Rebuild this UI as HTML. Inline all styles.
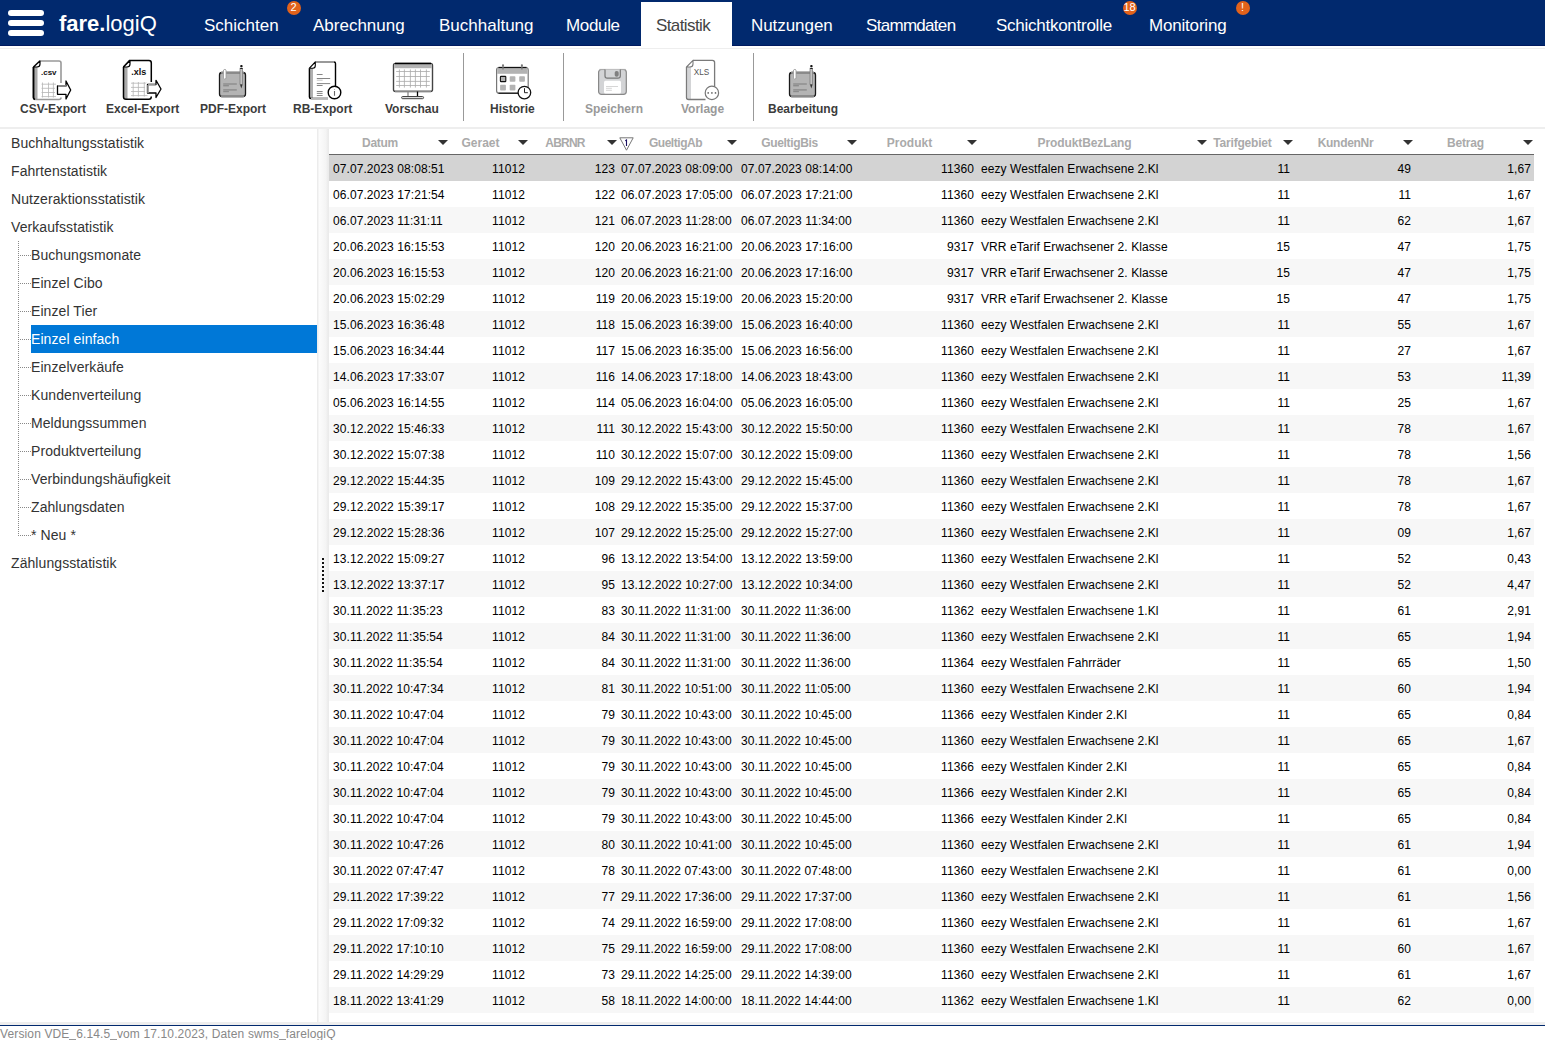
<!DOCTYPE html><html><head><meta charset="utf-8"><title>fare.logiQ</title><style>
*{box-sizing:border-box;margin:0;padding:0}
html,body{width:1545px;height:1040px;overflow:hidden;background:#fff;font-family:"Liberation Sans",sans-serif;position:relative}
.a{position:absolute;white-space:nowrap}
#nav{position:absolute;left:0;top:0;width:1545px;height:46px;background:#01296e;border-bottom:1px solid #001a60}
.bar{position:absolute;left:8px;width:36px;height:6px;border-radius:3px;background:#fff}
.tab{position:absolute;top:16px;font-size:17px;color:#fff;line-height:20px}
.badge{position:absolute;top:1px;width:14px;height:14px;border-radius:7px;background:#e2621b;color:#fff;font-size:11px;line-height:13px;text-align:center}
.tl{position:absolute;top:102px;font-size:12px;font-weight:bold;color:#3c3c3c;line-height:14px}
.tl.dis{color:#999}
.sep{position:absolute;top:53px;width:1px;height:68px;background:#999}
.tree{position:absolute;font-size:14px;color:#333;line-height:16px;letter-spacing:0.08px}
.hd{position:absolute;top:136px;font-size:12px;font-weight:bold;color:#aaa;line-height:14px;text-align:center}
.arr{position:absolute;top:140px;width:0;height:0;border-left:5px solid transparent;border-right:5px solid transparent;border-top:5px solid #333}
.us{display:inline-block;width:6.67px;height:1px;background:#999;vertical-align:-2px}
.row{position:absolute;left:329px;width:1205px;height:26px}
.c{position:absolute;top:7px;font-size:12px;color:#000;line-height:14px;white-space:nowrap;letter-spacing:0.08px}
</style></head><body>
<div id="nav">
<div class="bar" style="top:10px"></div>
<div class="bar" style="top:20px"></div>
<div class="bar" style="top:30px"></div>
<div class="a" style="left:59px;top:10.5px;font-size:22px;line-height:26px;color:#fff"><b>fare.</b>logiQ</div>
<div class="a" style="left:641px;top:2px;width:91px;height:44px;background:#fff"></div>
<div class="tab" style="left:204px;color:#fff;letter-spacing:0px">Schichten</div>
<div class="tab" style="left:313px;color:#fff;letter-spacing:0px">Abrechnung</div>
<div class="tab" style="left:439px;color:#fff;letter-spacing:0px">Buchhaltung</div>
<div class="tab" style="left:566px;color:#fff;letter-spacing:-0.34px">Module</div>
<div class="tab" style="left:656px;color:#444;letter-spacing:-0.6px">Statistik</div>
<div class="tab" style="left:751px;color:#fff;letter-spacing:-0.06px">Nutzungen</div>
<div class="tab" style="left:866px;color:#fff;letter-spacing:-0.7px">Stammdaten</div>
<div class="tab" style="left:996px;color:#fff;letter-spacing:-0.26px">Schichtkontrolle</div>
<div class="tab" style="left:1149px;color:#fff;letter-spacing:-0.19px">Monitoring</div>
<div class="badge" style="left:286.5px">2</div>
<div class="badge" style="left:1122.5px">18</div>
<div class="badge" style="left:1235.5px">!</div>
</div>
<div class="a" style="left:0;top:48px;width:1545px;height:1px;background:#eee"></div>
<div class="tl" style="left:20px">CSV-Export</div>
<div class="tl" style="left:106px">Excel-Export</div>
<div class="tl" style="left:200px">PDF-Export</div>
<div class="tl" style="left:293px">RB-Export</div>
<div class="tl" style="left:385px">Vorschau</div>
<div class="tl" style="left:490px">Historie</div>
<div class="tl dis" style="left:585px">Speichern</div>
<div class="tl dis" style="left:681px">Vorlage</div>
<div class="tl" style="left:768px">Bearbeitung</div>
<div class="sep" style="left:463px"></div>
<div class="sep" style="left:563px"></div>
<div class="sep" style="left:753px"></div>
<svg class="a" style="left:28px;top:56px" width="48" height="48" viewBox="0 0 48 48">
 <rect x="6" y="11" width="3.5" height="32" fill="#aaa"/>
 <path d="M5.5,11 L11.5,5 H31 Q33,5 33,7 V27" fill="none" stroke="#999" stroke-width="1.6"/>
 <path d="M5.5,11 V41.5 Q5.5,43.5 8,43.5 H31 Q33,43.5 33,41.5" fill="none" stroke="#999" stroke-width="1.6"/>
 <path d="M5.5,11 V41.5 Q5.5,43 7,43.5" fill="none" stroke="#000" stroke-width="1.8"/>
 <path d="M5.5,11 H9 Q12,11 12,8 V5 L5.5,11 Z" fill="#fff" stroke="#000" stroke-width="1.2" stroke-linejoin="round"/>
 <text x="13" y="19" font-family="Liberation Sans" font-size="8" font-weight="bold" fill="#111">.csv</text>
 <g stroke="#b5b5b5" stroke-width="0.8">
  <path d="M13.5,28.2 H28 M13.5,32.3 H27 M13.5,36.5 H27 M13.5,40.6 H28 M14.5,26.5 V41.5 M20.5,26.5 V41.5 M25.4,26.5 V41.5"/>
 </g>
 <path d="M29.5,30 H38 V25 L42.7,34 L38,43 V38.3 H29.5 Z" fill="#fff" stroke="#fff" stroke-width="4" stroke-linejoin="round"/>
 <path d="M29.5,30 H38 V25 L42.7,34 L38,43 V38.3 H29.5 Z" fill="#fff" stroke="#000" stroke-width="1.3" stroke-linejoin="round"/>
 <path d="M30,30 H38" stroke="#999" stroke-width="1.6"/>
</svg>
<svg class="a" style="left:118px;top:56px" width="48" height="48" viewBox="0 0 48 48">
 <rect x="6" y="11" width="3.5" height="32" fill="#aaa"/>
 <path d="M5.5,11 L11.5,4.5 H31 Q33.3,4.5 33.3,7 V26 M33.3,40.5 Q33.3,43.3 31,43.3 H8 Q5.5,43.3 5.5,41 V11" fill="none" stroke="#000" stroke-width="1.5"/>
 <path d="M5.5,11 H9 Q12,11 12,8 V4.5 L5.5,11 Z" fill="#fff" stroke="#000" stroke-width="1.2" stroke-linejoin="round"/>
 <text x="13.2" y="19" font-family="Liberation Sans" font-size="9" font-weight="bold" fill="#111">.xls</text>
 <g stroke="#b5b5b5" stroke-width="0.8">
  <path d="M13,27.2 H29 M13,31.4 H27 M13,35.5 H27 M13,39.6 H29.5 M15.2,26 V40.5 M20.4,26 V40.5 M26.3,26 V40.5"/>
 </g>
 <path d="M29.5,28.5 H38 V24.3 L43,33 L38,41.5 V37 H29.5 Z" fill="#fff" stroke="#fff" stroke-width="4" stroke-linejoin="round"/>
 <path d="M29.5,28.5 H38 V24.3 L43,33 L38,41.5 V37 H29.5 Z" fill="#fff" stroke="#000" stroke-width="1.3" stroke-linejoin="round"/>
 <path d="M30,28.5 H37.5 M30,29 V37" stroke="#999" stroke-width="1.6"/>
</svg>
<svg class="a" style="left:212px;top:60px" width="40" height="40" viewBox="0 0 40 40">
 <rect x="7.5" y="12.5" width="26" height="24" rx="2.5" fill="#b4b4b4" stroke="#1a1a1a" stroke-width="1.3"/>
 <path d="M9,12.5 H32 M9,36.5 H32" stroke="#8a8a8a" stroke-width="1.3"/>
 <path d="M11.5,10 L13,9.2 L14,10 V18.5 L12.5,19 L11.5,18.5 Z" fill="#fff" stroke="#999" stroke-width="0.8"/>
 <rect x="11.2" y="23.3" width="13.6" height="1.4" fill="#8c8c8c"/>
 <rect x="11.2" y="25" width="5.7" height="1.4" fill="#8c8c8c"/>
 <rect x="11.2" y="29.2" width="13.6" height="1.4" fill="#8c8c8c"/>
 <rect x="11.2" y="31" width="5.7" height="1.2" fill="#8c8c8c"/>
 <rect x="28" y="8.2" width="2.6" height="16.4" fill="#c4c4c4" stroke="#777" stroke-width="0.7"/>
 <rect x="28.2" y="5" width="2.4" height="2.2" rx="1" fill="#111"/>
 <rect x="28.2" y="8" width="2.4" height="0.9" fill="#111"/>
 <path d="M28,24.6 L29.3,28.5 L30.6,24.6 Z" fill="#333"/>
</svg>
<svg class="a" style="left:302px;top:56px" width="44" height="48" viewBox="0 0 44 48">
 <rect x="7.8" y="12" width="3.2" height="30.5" fill="#b0b0b0"/>
 <path d="M13.3,6 H32 Q33.5,6 33.5,7.5 V30 M26,42.5 H9 Q7.4,42.5 7.4,41 V12.2" fill="none" stroke="#000" stroke-width="1.4"/>
 <path d="M13.3,6 H32 M26,42.5 H9" stroke="#b8b8b8" stroke-width="1.4"/>
 <path d="M7.4,12.2 H11 Q13.3,12.2 13.3,9.5 V6 Z" fill="#fff" stroke="#000" stroke-width="1.1" stroke-linejoin="round"/>
 <g stroke="#777" stroke-width="0.9">
  <path d="M14.8,18.5 H20.6 M14.8,22.5 H28.2 M14.8,27.6 H28.2 M14.8,29.5 H20.6 M14.8,35.5 H20.6 M14.8,37.4 H20.6 M14.8,39.5 H20.6"/>
 </g>
 <path d="M14.8,24.2 H20.6" stroke="#bbb" stroke-width="0.9"/>
 <circle cx="32.5" cy="36.5" r="6.3" fill="#fff" stroke="#000" stroke-width="1.4"/>
 <path d="M32.5,33.2 V33.8 M32.5,35 V39.7" stroke="#666" stroke-width="1.1"/>
</svg>
<svg class="a" style="left:389px;top:58px" width="48" height="44" viewBox="0 0 48 44">
 <rect x="4.5" y="5.5" width="39" height="28" rx="2" fill="#fff" stroke="#444" stroke-width="1.4"/>
 <rect x="5.2" y="6.2" width="37.6" height="4" fill="#b3b3b3"/>
 <path d="M6,5.5 H42" stroke="#000" stroke-width="1.6"/>
 <path d="M6,33.2 H42" stroke="#888" stroke-width="1.4"/>
 <g stroke="#aaa" stroke-width="0.8">
  <path d="M7.2,13.5 H40.8 M7.2,18.5 H40.8 M7.2,23.4 H40.8 M7.2,27.5 H40.8 M10.4,11.4 V29.6 M15.4,11.4 V29.6 M21.4,11.4 V29.6 M26.4,11.4 V29.6 M31.5,11.4 V29.6 M37.4,11.4 V29.6"/>
 </g>
 <path d="M19,33.5 V38.3" stroke="#888" stroke-width="1.3"/>
 <path d="M28.5,33.5 V38.3" stroke="#000" stroke-width="1.3"/>
 <rect x="12.6" y="38.5" width="22" height="2.2" rx="1.1" fill="#ddd" stroke="#444" stroke-width="1"/>
</svg>
<svg class="a" style="left:490px;top:58px" width="48" height="44" viewBox="0 0 48 44">
 <rect x="6.6" y="9.6" width="31.6" height="25.6" rx="2.5" fill="#fff" stroke="#777" stroke-width="1.2"/>
 <rect x="7.2" y="10.2" width="30.4" height="5.6" fill="#b3b3b3"/>
 <path d="M8.5,9.5 H36.5" stroke="#111" stroke-width="1.3"/>
 <path d="M8.5,35.3 H30" stroke="#222" stroke-width="1.3"/>
 <circle cx="13" cy="7.3" r="1.1" fill="#777"/>
 <circle cx="31.9" cy="7.3" r="1.1" fill="#777"/>
 <path d="M13,8 V11.5 M31.9,8 V11.5" stroke="#777" stroke-width="1.3"/>
 <rect x="10.4" y="18.4" width="5.4" height="5.2" rx="0.7" fill="#b3b3b3" stroke="#111" stroke-width="1.1"/>
 <rect x="19.7" y="18.2" width="5.7" height="5.5" rx="0.8" fill="#b3b3b3"/>
 <rect x="29.2" y="18.2" width="5.7" height="5.5" rx="0.8" fill="#b3b3b3"/>
 <rect x="10.1" y="26.8" width="5.8" height="5.8" rx="0.8" fill="#b3b3b3"/>
 <rect x="19.7" y="26.8" width="5.7" height="5.8" rx="0.8" fill="#b3b3b3"/>
 <circle cx="34.4" cy="34.6" r="6.3" fill="#fff" stroke="#111" stroke-width="1.3"/>
 <path d="M34.5,30.2 V34.7 H37.8" fill="none" stroke="#222" stroke-width="1"/>
</svg>
<svg class="a" style="left:592px;top:62px" width="40" height="38" viewBox="0 0 40 38">
 <rect x="6.6" y="7.5" width="27.7" height="24.8" rx="2.8" fill="#d3d4d6" stroke="#888" stroke-width="1.2"/>
 <path d="M7.5,7.5 H33.5" stroke="#aaa" stroke-width="1.2"/>
 <path d="M13,7.5 V14 Q13,16.2 15.2,16.2 H26 Q28.3,16.2 28.3,14 V7.5" fill="#d3d4d6" stroke="#777" stroke-width="1.2"/>
 <rect x="22.7" y="8.9" width="4" height="5.9" rx="1.8" fill="#808080"/>
 <rect x="12" y="18.8" width="17" height="12.8" rx="1.5" fill="#fff"/>
 <path d="M14,24.5 H26 M14,26.3 H19.9 M14,28.3 H19.9" stroke="#ccc" stroke-width="0.8"/>
</svg>
<svg class="a" style="left:680px;top:56px" width="44" height="48" viewBox="0 0 44 48">
 <rect x="7.2" y="11" width="3.8" height="32.5" fill="#d3d4d6"/>
 <path d="M13,4.4 H32.4 Q34.6,4.4 34.6,6.6 V30.5 M25.5,43.5 H8.6 Q6.5,43.5 6.5,41.5 V11" fill="none" stroke="#7a7a7a" stroke-width="1.3"/>
 <path d="M6.5,11 H10 Q13,11 13,8 V4.4 Z" fill="#fff" stroke="#7a7a7a" stroke-width="1.1" stroke-linejoin="round"/>
 <text x="13.8" y="19" font-family="Liberation Sans" font-size="8.2" fill="#555">XLS</text>
 <circle cx="31.9" cy="36.9" r="6.7" fill="#fff" stroke="#777" stroke-width="1.2"/>
 <circle cx="28.2" cy="36.9" r="0.85" fill="#666"/>
 <circle cx="31.9" cy="36.9" r="0.85" fill="#666"/>
 <circle cx="35.5" cy="36.9" r="0.85" fill="#666"/>
</svg>
<svg class="a" style="left:782px;top:60px" width="40" height="40" viewBox="0 0 40 40">
 <rect x="7.5" y="12.5" width="26" height="24" rx="2.5" fill="#b4b4b4" stroke="#1a1a1a" stroke-width="1.3"/>
 <path d="M9,12.5 H32 M9,36.5 H32" stroke="#8a8a8a" stroke-width="1.3"/>
 <path d="M11.5,10 L13,9.2 L14,10 V18.5 L12.5,19 L11.5,18.5 Z" fill="#fff" stroke="#999" stroke-width="0.8"/>
 <rect x="11.2" y="23.3" width="13.6" height="1.4" fill="#8c8c8c"/>
 <rect x="11.2" y="25" width="5.7" height="1.4" fill="#8c8c8c"/>
 <rect x="11.2" y="29.2" width="13.6" height="1.4" fill="#8c8c8c"/>
 <rect x="11.2" y="31" width="5.7" height="1.2" fill="#8c8c8c"/>
 <rect x="28" y="8.2" width="2.6" height="16.4" fill="#c4c4c4" stroke="#777" stroke-width="0.7"/>
 <rect x="28.2" y="5" width="2.4" height="2.2" rx="1" fill="#111"/>
 <rect x="28.2" y="8" width="2.4" height="0.9" fill="#111"/>
 <path d="M28,24.6 L29.3,28.5 L30.6,24.6 Z" fill="#333"/>
</svg>

<div class="a" style="left:0;top:127px;width:1545px;height:2px;background:#eee"></div>
<div class="tree" style="left:11px;top:135px;color:#333">Buchhaltungsstatistik</div>
<div class="tree" style="left:11px;top:163px;color:#333">Fahrtenstatistik</div>
<div class="tree" style="left:11px;top:191px;color:#333">Nutzeraktionsstatistik</div>
<div class="tree" style="left:11px;top:219px;color:#333">Verkaufsstatistik</div>
<div class="tree" style="left:31px;top:247px;color:#333">Buchungsmonate</div>
<div class="a" style="left:18px;top:255px;width:13px;height:1px;background:repeating-linear-gradient(to right,#888 0 1px,transparent 1px 2px)"></div>
<div class="tree" style="left:31px;top:275px;color:#333">Einzel Cibo</div>
<div class="a" style="left:18px;top:283px;width:13px;height:1px;background:repeating-linear-gradient(to right,#888 0 1px,transparent 1px 2px)"></div>
<div class="tree" style="left:31px;top:303px;color:#333">Einzel Tier</div>
<div class="a" style="left:18px;top:311px;width:13px;height:1px;background:repeating-linear-gradient(to right,#888 0 1px,transparent 1px 2px)"></div>
<div class="a" style="left:31px;top:325px;width:286px;height:28px;background:#0078d7"></div>
<div class="tree" style="left:31px;top:331px;color:#fff">Einzel einfach</div>
<div class="a" style="left:18px;top:339px;width:13px;height:1px;background:repeating-linear-gradient(to right,#888 0 1px,transparent 1px 2px)"></div>
<div class="tree" style="left:31px;top:359px;color:#333">Einzelverkäufe</div>
<div class="a" style="left:18px;top:367px;width:13px;height:1px;background:repeating-linear-gradient(to right,#888 0 1px,transparent 1px 2px)"></div>
<div class="tree" style="left:31px;top:387px;color:#333">Kundenverteilung</div>
<div class="a" style="left:18px;top:395px;width:13px;height:1px;background:repeating-linear-gradient(to right,#888 0 1px,transparent 1px 2px)"></div>
<div class="tree" style="left:31px;top:415px;color:#333">Meldungssummen</div>
<div class="a" style="left:18px;top:423px;width:13px;height:1px;background:repeating-linear-gradient(to right,#888 0 1px,transparent 1px 2px)"></div>
<div class="tree" style="left:31px;top:443px;color:#333">Produktverteilung</div>
<div class="a" style="left:18px;top:451px;width:13px;height:1px;background:repeating-linear-gradient(to right,#888 0 1px,transparent 1px 2px)"></div>
<div class="tree" style="left:31px;top:471px;color:#333">Verbindungshäufigkeit</div>
<div class="a" style="left:18px;top:479px;width:13px;height:1px;background:repeating-linear-gradient(to right,#888 0 1px,transparent 1px 2px)"></div>
<div class="tree" style="left:31px;top:499px;color:#333">Zahlungsdaten</div>
<div class="a" style="left:18px;top:507px;width:13px;height:1px;background:repeating-linear-gradient(to right,#888 0 1px,transparent 1px 2px)"></div>
<div class="tree" style="left:31px;top:527px;color:#333">* Neu *</div>
<div class="a" style="left:18px;top:535px;width:13px;height:1px;background:repeating-linear-gradient(to right,#888 0 1px,transparent 1px 2px)"></div>
<div class="tree" style="left:11px;top:555px;color:#333">Zählungsstatistik</div>
<div class="a" style="left:18px;top:241px;width:1px;height:295px;background:repeating-linear-gradient(to bottom,#888 0 1px,transparent 1px 2px)"></div>
<div class="a" style="left:317px;top:129px;width:12px;height:893px;background:linear-gradient(to right,#ececec 0,#ececec 1px,#fcfcfc 2px,#f4f4f4 9px,#ebebeb 11px)"></div>
<div class="a" style="left:322px;top:558px;width:2px;height:34px;border-left:2px dotted #111"></div>
<div class="hd" style="left:329.5px;width:101px;letter-spacing:-0.27px">Datum</div>
<div class="arr" style="left:438px"></div>
<div class="hd" style="left:450.5px;width:60px;letter-spacing:0px">Geraet</div>
<div class="arr" style="left:518px"></div>
<div class="hd" style="left:530.5px;width:69px;letter-spacing:-0.8px">ABRNR</div>
<div class="arr" style="left:607px"></div>
<div class="hd" style="left:631.5px;width:88px;letter-spacing:-0.46px">GueltigAb</div>
<div class="arr" style="left:727px"></div>
<div class="hd" style="left:739.5px;width:100px;letter-spacing:-0.33px">GueltigBis</div>
<div class="arr" style="left:847px"></div>
<div class="hd" style="left:859.5px;width:100px;letter-spacing:0px">Produkt</div>
<div class="arr" style="left:967px"></div>
<div class="hd" style="left:979.5px;width:210px;letter-spacing:-0.11px">ProduktBezLang</div>
<div class="arr" style="left:1197px"></div>
<div class="hd" style="left:1209.5px;width:66px;letter-spacing:-0.2px">Tarifgebiet</div>
<div class="arr" style="left:1283px"></div>
<div class="hd" style="left:1295.5px;width:100px;letter-spacing:-0.31px">KundenNr</div>
<div class="arr" style="left:1403px"></div>
<div class="hd" style="left:1415.5px;width:100px;letter-spacing:-0.2px">Betrag</div>
<div class="arr" style="left:1523px"></div>
<div class="a" style="left:329px;top:154px;width:1205px;height:1px;background:#666"></div>
<svg class="a" style="left:619px;top:137px" width="15" height="14" viewBox="0 0 15 14">
 <path d="M0.8,0.8 H14.2 L7.5,13.2 Z" fill="#fff" stroke="#777" stroke-width="1"/>
 <path d="M6.3,3.8 L7.5,3 V9" fill="none" stroke="#1a1060" stroke-width="1.1"/>
</svg>

<div class="row" style="top:155px;background:#d3d3d3">
<div class="c" style="left:4px">07.07.2023 08:08:51</div>
<div class="c" style="right:1009px">11012</div>
<div class="c" style="right:919px">123</div>
<div class="c" style="left:292px">07.07.2023 08:09:00</div>
<div class="c" style="left:412px">07.07.2023 08:14:00</div>
<div class="c" style="right:560px">11360</div>
<div class="c" style="left:652px">eezy Westfalen Erwachsene 2.Kl</div>
<div class="c" style="right:244px">11</div>
<div class="c" style="right:123px">49</div>
<div class="c" style="right:3px">1,67</div>
</div>
<div class="row" style="top:181px;background:#fff">
<div class="c" style="left:4px">06.07.2023 17:21:54</div>
<div class="c" style="right:1009px">11012</div>
<div class="c" style="right:919px">122</div>
<div class="c" style="left:292px">06.07.2023 17:05:00</div>
<div class="c" style="left:412px">06.07.2023 17:21:00</div>
<div class="c" style="right:560px">11360</div>
<div class="c" style="left:652px">eezy Westfalen Erwachsene 2.Kl</div>
<div class="c" style="right:244px">11</div>
<div class="c" style="right:123px">11</div>
<div class="c" style="right:3px">1,67</div>
</div>
<div class="row" style="top:207px;background:#f7f7f7">
<div class="c" style="left:4px">06.07.2023 11:31:11</div>
<div class="c" style="right:1009px">11012</div>
<div class="c" style="right:919px">121</div>
<div class="c" style="left:292px">06.07.2023 11:28:00</div>
<div class="c" style="left:412px">06.07.2023 11:34:00</div>
<div class="c" style="right:560px">11360</div>
<div class="c" style="left:652px">eezy Westfalen Erwachsene 2.Kl</div>
<div class="c" style="right:244px">11</div>
<div class="c" style="right:123px">62</div>
<div class="c" style="right:3px">1,67</div>
</div>
<div class="row" style="top:233px;background:#fff">
<div class="c" style="left:4px">20.06.2023 16:15:53</div>
<div class="c" style="right:1009px">11012</div>
<div class="c" style="right:919px">120</div>
<div class="c" style="left:292px">20.06.2023 16:21:00</div>
<div class="c" style="left:412px">20.06.2023 17:16:00</div>
<div class="c" style="right:560px">9317</div>
<div class="c" style="left:652px">VRR eTarif Erwachsener 2. Klasse</div>
<div class="c" style="right:244px">15</div>
<div class="c" style="right:123px">47</div>
<div class="c" style="right:3px">1,75</div>
</div>
<div class="row" style="top:259px;background:#f7f7f7">
<div class="c" style="left:4px">20.06.2023 16:15:53</div>
<div class="c" style="right:1009px">11012</div>
<div class="c" style="right:919px">120</div>
<div class="c" style="left:292px">20.06.2023 16:21:00</div>
<div class="c" style="left:412px">20.06.2023 17:16:00</div>
<div class="c" style="right:560px">9317</div>
<div class="c" style="left:652px">VRR eTarif Erwachsener 2. Klasse</div>
<div class="c" style="right:244px">15</div>
<div class="c" style="right:123px">47</div>
<div class="c" style="right:3px">1,75</div>
</div>
<div class="row" style="top:285px;background:#fff">
<div class="c" style="left:4px">20.06.2023 15:02:29</div>
<div class="c" style="right:1009px">11012</div>
<div class="c" style="right:919px">119</div>
<div class="c" style="left:292px">20.06.2023 15:19:00</div>
<div class="c" style="left:412px">20.06.2023 15:20:00</div>
<div class="c" style="right:560px">9317</div>
<div class="c" style="left:652px">VRR eTarif Erwachsener 2. Klasse</div>
<div class="c" style="right:244px">15</div>
<div class="c" style="right:123px">47</div>
<div class="c" style="right:3px">1,75</div>
</div>
<div class="row" style="top:311px;background:#f7f7f7">
<div class="c" style="left:4px">15.06.2023 16:36:48</div>
<div class="c" style="right:1009px">11012</div>
<div class="c" style="right:919px">118</div>
<div class="c" style="left:292px">15.06.2023 16:39:00</div>
<div class="c" style="left:412px">15.06.2023 16:40:00</div>
<div class="c" style="right:560px">11360</div>
<div class="c" style="left:652px">eezy Westfalen Erwachsene 2.Kl</div>
<div class="c" style="right:244px">11</div>
<div class="c" style="right:123px">55</div>
<div class="c" style="right:3px">1,67</div>
</div>
<div class="row" style="top:337px;background:#fff">
<div class="c" style="left:4px">15.06.2023 16:34:44</div>
<div class="c" style="right:1009px">11012</div>
<div class="c" style="right:919px">117</div>
<div class="c" style="left:292px">15.06.2023 16:35:00</div>
<div class="c" style="left:412px">15.06.2023 16:56:00</div>
<div class="c" style="right:560px">11360</div>
<div class="c" style="left:652px">eezy Westfalen Erwachsene 2.Kl</div>
<div class="c" style="right:244px">11</div>
<div class="c" style="right:123px">27</div>
<div class="c" style="right:3px">1,67</div>
</div>
<div class="row" style="top:363px;background:#f7f7f7">
<div class="c" style="left:4px">14.06.2023 17:33:07</div>
<div class="c" style="right:1009px">11012</div>
<div class="c" style="right:919px">116</div>
<div class="c" style="left:292px">14.06.2023 17:18:00</div>
<div class="c" style="left:412px">14.06.2023 18:43:00</div>
<div class="c" style="right:560px">11360</div>
<div class="c" style="left:652px">eezy Westfalen Erwachsene 2.Kl</div>
<div class="c" style="right:244px">11</div>
<div class="c" style="right:123px">53</div>
<div class="c" style="right:3px">11,39</div>
</div>
<div class="row" style="top:389px;background:#fff">
<div class="c" style="left:4px">05.06.2023 16:14:55</div>
<div class="c" style="right:1009px">11012</div>
<div class="c" style="right:919px">114</div>
<div class="c" style="left:292px">05.06.2023 16:04:00</div>
<div class="c" style="left:412px">05.06.2023 16:05:00</div>
<div class="c" style="right:560px">11360</div>
<div class="c" style="left:652px">eezy Westfalen Erwachsene 2.Kl</div>
<div class="c" style="right:244px">11</div>
<div class="c" style="right:123px">25</div>
<div class="c" style="right:3px">1,67</div>
</div>
<div class="row" style="top:415px;background:#f7f7f7">
<div class="c" style="left:4px">30.12.2022 15:46:33</div>
<div class="c" style="right:1009px">11012</div>
<div class="c" style="right:919px">111</div>
<div class="c" style="left:292px">30.12.2022 15:43:00</div>
<div class="c" style="left:412px">30.12.2022 15:50:00</div>
<div class="c" style="right:560px">11360</div>
<div class="c" style="left:652px">eezy Westfalen Erwachsene 2.Kl</div>
<div class="c" style="right:244px">11</div>
<div class="c" style="right:123px">78</div>
<div class="c" style="right:3px">1,67</div>
</div>
<div class="row" style="top:441px;background:#fff">
<div class="c" style="left:4px">30.12.2022 15:07:38</div>
<div class="c" style="right:1009px">11012</div>
<div class="c" style="right:919px">110</div>
<div class="c" style="left:292px">30.12.2022 15:07:00</div>
<div class="c" style="left:412px">30.12.2022 15:09:00</div>
<div class="c" style="right:560px">11360</div>
<div class="c" style="left:652px">eezy Westfalen Erwachsene 2.Kl</div>
<div class="c" style="right:244px">11</div>
<div class="c" style="right:123px">78</div>
<div class="c" style="right:3px">1,56</div>
</div>
<div class="row" style="top:467px;background:#f7f7f7">
<div class="c" style="left:4px">29.12.2022 15:44:35</div>
<div class="c" style="right:1009px">11012</div>
<div class="c" style="right:919px">109</div>
<div class="c" style="left:292px">29.12.2022 15:43:00</div>
<div class="c" style="left:412px">29.12.2022 15:45:00</div>
<div class="c" style="right:560px">11360</div>
<div class="c" style="left:652px">eezy Westfalen Erwachsene 2.Kl</div>
<div class="c" style="right:244px">11</div>
<div class="c" style="right:123px">78</div>
<div class="c" style="right:3px">1,67</div>
</div>
<div class="row" style="top:493px;background:#fff">
<div class="c" style="left:4px">29.12.2022 15:39:17</div>
<div class="c" style="right:1009px">11012</div>
<div class="c" style="right:919px">108</div>
<div class="c" style="left:292px">29.12.2022 15:35:00</div>
<div class="c" style="left:412px">29.12.2022 15:37:00</div>
<div class="c" style="right:560px">11360</div>
<div class="c" style="left:652px">eezy Westfalen Erwachsene 2.Kl</div>
<div class="c" style="right:244px">11</div>
<div class="c" style="right:123px">78</div>
<div class="c" style="right:3px">1,67</div>
</div>
<div class="row" style="top:519px;background:#f7f7f7">
<div class="c" style="left:4px">29.12.2022 15:28:36</div>
<div class="c" style="right:1009px">11012</div>
<div class="c" style="right:919px">107</div>
<div class="c" style="left:292px">29.12.2022 15:25:00</div>
<div class="c" style="left:412px">29.12.2022 15:27:00</div>
<div class="c" style="right:560px">11360</div>
<div class="c" style="left:652px">eezy Westfalen Erwachsene 2.Kl</div>
<div class="c" style="right:244px">11</div>
<div class="c" style="right:123px">09</div>
<div class="c" style="right:3px">1,67</div>
</div>
<div class="row" style="top:545px;background:#fff">
<div class="c" style="left:4px">13.12.2022 15:09:27</div>
<div class="c" style="right:1009px">11012</div>
<div class="c" style="right:919px">96</div>
<div class="c" style="left:292px">13.12.2022 13:54:00</div>
<div class="c" style="left:412px">13.12.2022 13:59:00</div>
<div class="c" style="right:560px">11360</div>
<div class="c" style="left:652px">eezy Westfalen Erwachsene 2.Kl</div>
<div class="c" style="right:244px">11</div>
<div class="c" style="right:123px">52</div>
<div class="c" style="right:3px">0,43</div>
</div>
<div class="row" style="top:571px;background:#f7f7f7">
<div class="c" style="left:4px">13.12.2022 13:37:17</div>
<div class="c" style="right:1009px">11012</div>
<div class="c" style="right:919px">95</div>
<div class="c" style="left:292px">13.12.2022 10:27:00</div>
<div class="c" style="left:412px">13.12.2022 10:34:00</div>
<div class="c" style="right:560px">11360</div>
<div class="c" style="left:652px">eezy Westfalen Erwachsene 2.Kl</div>
<div class="c" style="right:244px">11</div>
<div class="c" style="right:123px">52</div>
<div class="c" style="right:3px">4,47</div>
</div>
<div class="row" style="top:597px;background:#fff">
<div class="c" style="left:4px">30.11.2022 11:35:23</div>
<div class="c" style="right:1009px">11012</div>
<div class="c" style="right:919px">83</div>
<div class="c" style="left:292px">30.11.2022 11:31:00</div>
<div class="c" style="left:412px">30.11.2022 11:36:00</div>
<div class="c" style="right:560px">11362</div>
<div class="c" style="left:652px">eezy Westfalen Erwachsene 1.Kl</div>
<div class="c" style="right:244px">11</div>
<div class="c" style="right:123px">61</div>
<div class="c" style="right:3px">2,91</div>
</div>
<div class="row" style="top:623px;background:#f7f7f7">
<div class="c" style="left:4px">30.11.2022 11:35:54</div>
<div class="c" style="right:1009px">11012</div>
<div class="c" style="right:919px">84</div>
<div class="c" style="left:292px">30.11.2022 11:31:00</div>
<div class="c" style="left:412px">30.11.2022 11:36:00</div>
<div class="c" style="right:560px">11360</div>
<div class="c" style="left:652px">eezy Westfalen Erwachsene 2.Kl</div>
<div class="c" style="right:244px">11</div>
<div class="c" style="right:123px">65</div>
<div class="c" style="right:3px">1,94</div>
</div>
<div class="row" style="top:649px;background:#fff">
<div class="c" style="left:4px">30.11.2022 11:35:54</div>
<div class="c" style="right:1009px">11012</div>
<div class="c" style="right:919px">84</div>
<div class="c" style="left:292px">30.11.2022 11:31:00</div>
<div class="c" style="left:412px">30.11.2022 11:36:00</div>
<div class="c" style="right:560px">11364</div>
<div class="c" style="left:652px">eezy Westfalen Fahrräder</div>
<div class="c" style="right:244px">11</div>
<div class="c" style="right:123px">65</div>
<div class="c" style="right:3px">1,50</div>
</div>
<div class="row" style="top:675px;background:#f7f7f7">
<div class="c" style="left:4px">30.11.2022 10:47:34</div>
<div class="c" style="right:1009px">11012</div>
<div class="c" style="right:919px">81</div>
<div class="c" style="left:292px">30.11.2022 10:51:00</div>
<div class="c" style="left:412px">30.11.2022 11:05:00</div>
<div class="c" style="right:560px">11360</div>
<div class="c" style="left:652px">eezy Westfalen Erwachsene 2.Kl</div>
<div class="c" style="right:244px">11</div>
<div class="c" style="right:123px">60</div>
<div class="c" style="right:3px">1,94</div>
</div>
<div class="row" style="top:701px;background:#fff">
<div class="c" style="left:4px">30.11.2022 10:47:04</div>
<div class="c" style="right:1009px">11012</div>
<div class="c" style="right:919px">79</div>
<div class="c" style="left:292px">30.11.2022 10:43:00</div>
<div class="c" style="left:412px">30.11.2022 10:45:00</div>
<div class="c" style="right:560px">11366</div>
<div class="c" style="left:652px">eezy Westfalen Kinder 2.Kl</div>
<div class="c" style="right:244px">11</div>
<div class="c" style="right:123px">65</div>
<div class="c" style="right:3px">0,84</div>
</div>
<div class="row" style="top:727px;background:#f7f7f7">
<div class="c" style="left:4px">30.11.2022 10:47:04</div>
<div class="c" style="right:1009px">11012</div>
<div class="c" style="right:919px">79</div>
<div class="c" style="left:292px">30.11.2022 10:43:00</div>
<div class="c" style="left:412px">30.11.2022 10:45:00</div>
<div class="c" style="right:560px">11360</div>
<div class="c" style="left:652px">eezy Westfalen Erwachsene 2.Kl</div>
<div class="c" style="right:244px">11</div>
<div class="c" style="right:123px">65</div>
<div class="c" style="right:3px">1,67</div>
</div>
<div class="row" style="top:753px;background:#fff">
<div class="c" style="left:4px">30.11.2022 10:47:04</div>
<div class="c" style="right:1009px">11012</div>
<div class="c" style="right:919px">79</div>
<div class="c" style="left:292px">30.11.2022 10:43:00</div>
<div class="c" style="left:412px">30.11.2022 10:45:00</div>
<div class="c" style="right:560px">11366</div>
<div class="c" style="left:652px">eezy Westfalen Kinder 2.Kl</div>
<div class="c" style="right:244px">11</div>
<div class="c" style="right:123px">65</div>
<div class="c" style="right:3px">0,84</div>
</div>
<div class="row" style="top:779px;background:#f7f7f7">
<div class="c" style="left:4px">30.11.2022 10:47:04</div>
<div class="c" style="right:1009px">11012</div>
<div class="c" style="right:919px">79</div>
<div class="c" style="left:292px">30.11.2022 10:43:00</div>
<div class="c" style="left:412px">30.11.2022 10:45:00</div>
<div class="c" style="right:560px">11366</div>
<div class="c" style="left:652px">eezy Westfalen Kinder 2.Kl</div>
<div class="c" style="right:244px">11</div>
<div class="c" style="right:123px">65</div>
<div class="c" style="right:3px">0,84</div>
</div>
<div class="row" style="top:805px;background:#fff">
<div class="c" style="left:4px">30.11.2022 10:47:04</div>
<div class="c" style="right:1009px">11012</div>
<div class="c" style="right:919px">79</div>
<div class="c" style="left:292px">30.11.2022 10:43:00</div>
<div class="c" style="left:412px">30.11.2022 10:45:00</div>
<div class="c" style="right:560px">11366</div>
<div class="c" style="left:652px">eezy Westfalen Kinder 2.Kl</div>
<div class="c" style="right:244px">11</div>
<div class="c" style="right:123px">65</div>
<div class="c" style="right:3px">0,84</div>
</div>
<div class="row" style="top:831px;background:#f7f7f7">
<div class="c" style="left:4px">30.11.2022 10:47:26</div>
<div class="c" style="right:1009px">11012</div>
<div class="c" style="right:919px">80</div>
<div class="c" style="left:292px">30.11.2022 10:41:00</div>
<div class="c" style="left:412px">30.11.2022 10:45:00</div>
<div class="c" style="right:560px">11360</div>
<div class="c" style="left:652px">eezy Westfalen Erwachsene 2.Kl</div>
<div class="c" style="right:244px">11</div>
<div class="c" style="right:123px">61</div>
<div class="c" style="right:3px">1,94</div>
</div>
<div class="row" style="top:857px;background:#fff">
<div class="c" style="left:4px">30.11.2022 07:47:47</div>
<div class="c" style="right:1009px">11012</div>
<div class="c" style="right:919px">78</div>
<div class="c" style="left:292px">30.11.2022 07:43:00</div>
<div class="c" style="left:412px">30.11.2022 07:48:00</div>
<div class="c" style="right:560px">11360</div>
<div class="c" style="left:652px">eezy Westfalen Erwachsene 2.Kl</div>
<div class="c" style="right:244px">11</div>
<div class="c" style="right:123px">61</div>
<div class="c" style="right:3px">0,00</div>
</div>
<div class="row" style="top:883px;background:#f7f7f7">
<div class="c" style="left:4px">29.11.2022 17:39:22</div>
<div class="c" style="right:1009px">11012</div>
<div class="c" style="right:919px">77</div>
<div class="c" style="left:292px">29.11.2022 17:36:00</div>
<div class="c" style="left:412px">29.11.2022 17:37:00</div>
<div class="c" style="right:560px">11360</div>
<div class="c" style="left:652px">eezy Westfalen Erwachsene 2.Kl</div>
<div class="c" style="right:244px">11</div>
<div class="c" style="right:123px">61</div>
<div class="c" style="right:3px">1,56</div>
</div>
<div class="row" style="top:909px;background:#fff">
<div class="c" style="left:4px">29.11.2022 17:09:32</div>
<div class="c" style="right:1009px">11012</div>
<div class="c" style="right:919px">74</div>
<div class="c" style="left:292px">29.11.2022 16:59:00</div>
<div class="c" style="left:412px">29.11.2022 17:08:00</div>
<div class="c" style="right:560px">11360</div>
<div class="c" style="left:652px">eezy Westfalen Erwachsene 2.Kl</div>
<div class="c" style="right:244px">11</div>
<div class="c" style="right:123px">61</div>
<div class="c" style="right:3px">1,67</div>
</div>
<div class="row" style="top:935px;background:#f7f7f7">
<div class="c" style="left:4px">29.11.2022 17:10:10</div>
<div class="c" style="right:1009px">11012</div>
<div class="c" style="right:919px">75</div>
<div class="c" style="left:292px">29.11.2022 16:59:00</div>
<div class="c" style="left:412px">29.11.2022 17:08:00</div>
<div class="c" style="right:560px">11360</div>
<div class="c" style="left:652px">eezy Westfalen Erwachsene 2.Kl</div>
<div class="c" style="right:244px">11</div>
<div class="c" style="right:123px">60</div>
<div class="c" style="right:3px">1,67</div>
</div>
<div class="row" style="top:961px;background:#fff">
<div class="c" style="left:4px">29.11.2022 14:29:29</div>
<div class="c" style="right:1009px">11012</div>
<div class="c" style="right:919px">73</div>
<div class="c" style="left:292px">29.11.2022 14:25:00</div>
<div class="c" style="left:412px">29.11.2022 14:39:00</div>
<div class="c" style="right:560px">11360</div>
<div class="c" style="left:652px">eezy Westfalen Erwachsene 2.Kl</div>
<div class="c" style="right:244px">11</div>
<div class="c" style="right:123px">61</div>
<div class="c" style="right:3px">1,67</div>
</div>
<div class="row" style="top:987px;background:#f7f7f7">
<div class="c" style="left:4px">18.11.2022 13:41:29</div>
<div class="c" style="right:1009px">11012</div>
<div class="c" style="right:919px">58</div>
<div class="c" style="left:292px">18.11.2022 14:00:00</div>
<div class="c" style="left:412px">18.11.2022 14:44:00</div>
<div class="c" style="right:560px">11362</div>
<div class="c" style="left:652px">eezy Westfalen Erwachsene 1.Kl</div>
<div class="c" style="right:244px">11</div>
<div class="c" style="right:123px">62</div>
<div class="c" style="right:3px">0,00</div>
</div>
<div class="a" style="left:0;top:1022px;width:1545px;height:3px;background:#eee"></div>
<div class="a" style="left:0;top:1025px;width:1545px;height:1px;background:#01296e"></div>
<div class="a" style="left:0;top:1027px;font-size:12px;color:#888;line-height:14px;letter-spacing:0.13px">Version VDE<span class=us></span>6.14.5<span class=us></span>vom 17.10.2023, Daten swms<span class=us></span>farelogiQ</div>
</body></html>
